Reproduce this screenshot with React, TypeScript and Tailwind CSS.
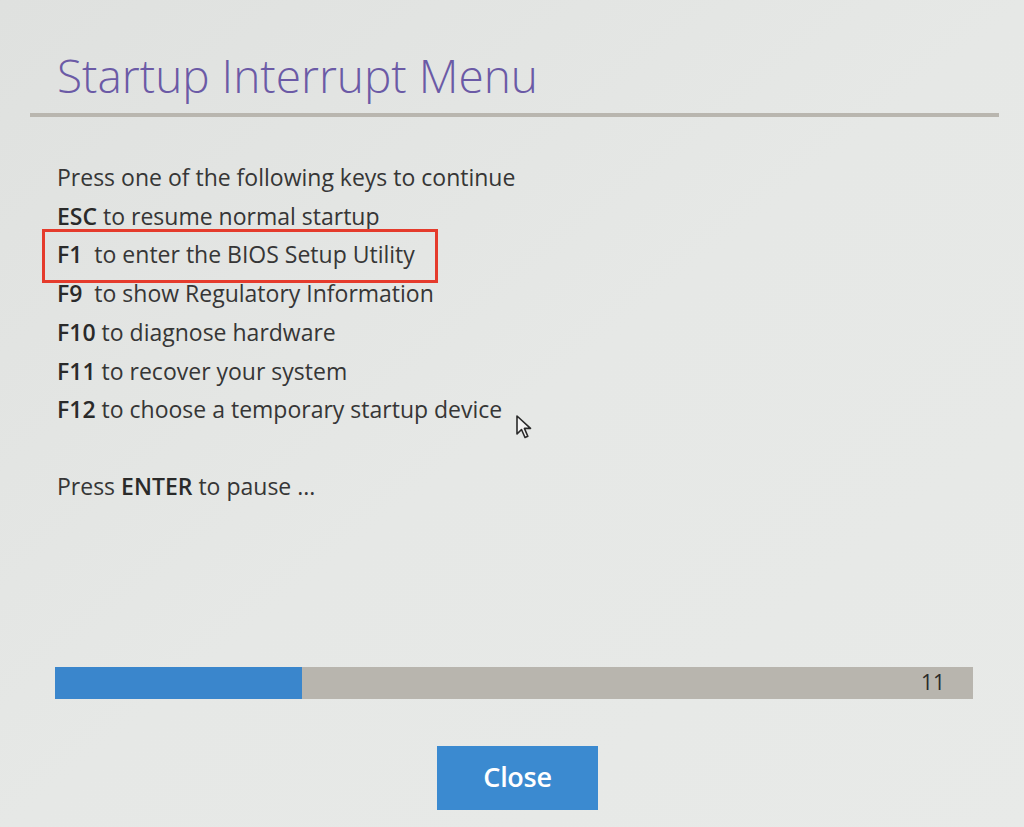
import React from "react";

const lines: { key: string; gap: string; text: string; boxed?: boolean }[] = [
    { key: "ESC", gap: " ", text: "to resume normal startup" },
    { key: "F1", gap: "\u00a0\u00a0", text: "to enter the BIOS Setup Utility", boxed: true },
    { key: "F9", gap: "\u00a0\u00a0", text: "to show Regulatory Information" },
    { key: "F10", gap: " ", text: "to diagnose hardware" },
    { key: "F11", gap: " ", text: "to recover your system" },
    { key: "F12", gap: " ", text: "to choose a temporary startup device" },
];

const Cursor = () => (
    <svg width="18" height="26" viewBox="0 0 18 26" className="absolute left-[515px] top-[414px]">
        <path
            d="M2 2 L2 20 L6.5 15.5 L10 23.5 L12.8 22.3 L9.4 14.4 L15.5 14.4 Z"
            fill="#f4f4f4"
            stroke="#2a2a2a"
            strokeWidth="1.6"
            strokeLinejoin="round"
        />
    </svg>
);

export default function App() {
    return (
        <div
            className="relative w-[1024px] h-[827px] overflow-hidden bg-gradient-to-br from-[#dfe1df] via-[#e6e8e6] to-[#e8eae8] text-[#363636]"
            style={{ fontFamily: '"Open Sans", "Noto Sans", sans-serif' }}
        >
            {/* Header */}
            <div className="pt-[45px] pl-[57px]">
                <h1 className="text-[46px] leading-[60px] font-light text-[#6b5aa6]">
                    Startup Interrupt Menu
                </h1>
            </div>
            <div className="mt-[8px] ml-[30px] w-[969px] h-[4px] bg-[#b9b6af]" />

            {/* Key list */}
            <div className="mt-[41px] pl-[57px] text-[23px] leading-[38.7px]">
                <div>Press one of the following keys to continue</div>
                {lines.map((l) => (
                    <div key={l.key} className="relative">
                        <span className="font-semibold text-[#2a2a2a]">{l.key}</span>
                        {l.gap}
                        {l.text}
                        {l.boxed && (
                            <span className="absolute left-[-15px] top-[-6px] w-[396px] h-[54px] border-[3px] border-[#e53b2c]" />
                        )}
                    </div>
                ))}
                <div className="mt-[38px]">
                    Press <span className="font-semibold text-[#2a2a2a]">ENTER</span> to pause ...
                </div>
            </div>

            <Cursor />

            {/* Progress */}
            <div className="mt-[161px] ml-[55px] w-[918px] h-[32px] bg-[#b8b5ae] flex items-center">
                <div className="w-[247px] h-full bg-[#3a86cc]" />
                <div className="flex-1 text-right pr-[28px] text-[21px] text-[#2a2a2a]">11</div>
            </div>

            {/* Close */}
            <div className="mt-[47px] flex justify-center">
                <button className="ml-[11px] w-[161px] h-[64px] bg-[#3b8ad0] text-white text-[27px] font-semibold tracking-[-0.3px]">
                    Close
                </button>
            </div>
        </div>
    );
}
